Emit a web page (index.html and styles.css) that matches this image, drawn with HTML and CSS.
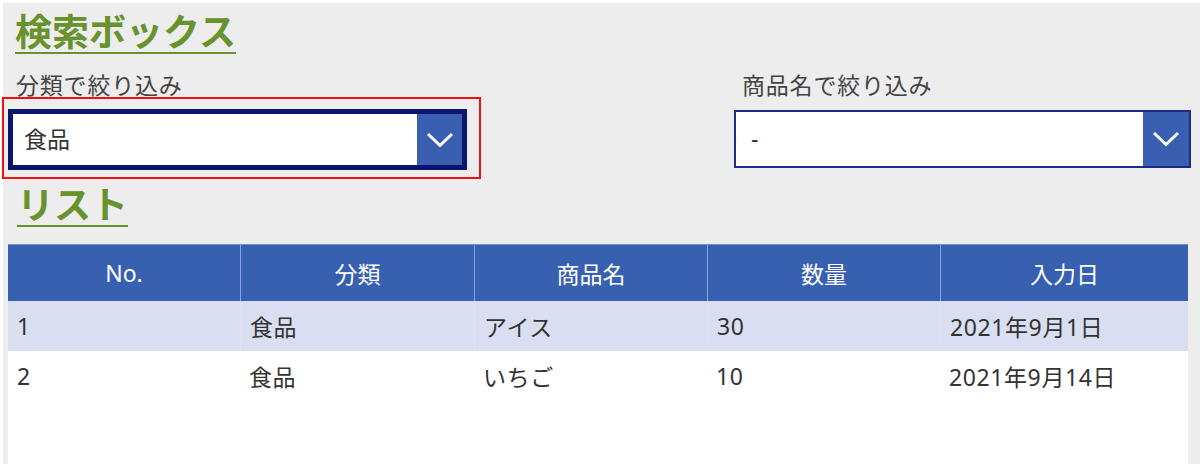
FILE: index.html
```html
<!DOCTYPE html>
<html lang="ja">
<head>
<meta charset="utf-8">
<title>検索ボックス</title>
<link rel="stylesheet" href="styles.css">
</head>
<body>
<div class="panel">
  <h1 class="section-title">検索ボックス</h1>
  <div class="filters">
    <div class="filter">
      <div class="filter-label">分類で絞り込み</div>
      <div class="dropdown dropdown-focused">
        <span class="dropdown-value">食品</span>
        <span class="dropdown-button">
          <svg width="28" height="16" viewBox="0 0 28 16"><polyline points="2,2 14,13.5 26,2" fill="none" stroke="#fff" stroke-width="3"/></svg>
        </span>
        <span class="highlight"></span>
      </div>
    </div>
    <div class="filter">
      <div class="filter-label">商品名で絞り込み</div>
      <div class="dropdown">
        <span class="dropdown-value">-</span>
        <span class="dropdown-button">
          <svg width="28" height="16" viewBox="0 0 28 16"><polyline points="2,2 14,13.5 26,2" fill="none" stroke="#fff" stroke-width="3"/></svg>
        </span>
      </div>
    </div>
  </div>
  <h1 class="section-title">リスト</h1>
  <div class="table">
    <div class="row head">
      <div class="cell">No.</div>
      <div class="cell">分類</div>
      <div class="cell">商品名</div>
      <div class="cell">数量</div>
      <div class="cell">入力日</div>
    </div>
    <div class="row body-row selected">
      <div class="cell">1</div>
      <div class="cell">食品</div>
      <div class="cell">アイス</div>
      <div class="cell">30</div>
      <div class="cell">2021年9月1日</div>
    </div>
    <div class="row body-row">
      <div class="cell">2</div>
      <div class="cell">食品</div>
      <div class="cell">いちご</div>
      <div class="cell">10</div>
      <div class="cell">2021年9月14日</div>
    </div>
  </div>
</div>
</body>
</html>
```
FILE: styles.css
```css
html, body {
  margin: 0;
  padding: 0;
  background: #ffffff;
}

body {
  font-family: "Noto Sans", "Noto Sans CJK JP", sans-serif;
  color: #333333;
}

.panel {
  margin: 3px 0 0 3px;
  height: 461px;
  background: #ededed;
  padding: 7px 0 0 5px;
  box-sizing: border-box;
  display: flex;
  flex-direction: column;
}

.section-title {
  margin: 0;
  padding-left: 7px;
  font-size: 37px;
  line-height: 44px;
  font-weight: 700;
  color: #67922c;
  text-decoration: underline;
  text-decoration-thickness: 2px;
  text-underline-offset: 6px;
  align-self: flex-start;
}

.filters {
  display: grid;
  grid-template-columns: 459px 457px;
  column-gap: 267px;
  align-items: start;
  margin-top: 16px;
}

.filter-label {
  font-size: 23px;
  line-height: 30px;
  color: #444444;
  padding-left: 8px;
  letter-spacing: 0.8px;
}

.dropdown {
  position: relative;
  margin-top: 10px;
  height: 58px;
  box-sizing: border-box;
  border: 2px solid #1c2c84;
  background: #ffffff;
  display: flex;
  align-items: stretch;
}

.dropdown-focused {
  margin-top: 9px;
  height: 61px;
  border: 5px solid #0a166e;
}

.dropdown-value {
  flex: 1;
  display: flex;
  align-items: center;
  padding-left: 15px;
  padding-bottom: 3px;
  font-size: 23px;
  color: #333333;
}

.dropdown-focused .dropdown-value {
  padding-left: 11px;
}

.dropdown-button {
  width: 46px;
  background: #3a5fb1;
  display: flex;
  align-items: center;
  justify-content: center;
}

.dropdown-focused .dropdown-button {
  width: 45px;
}

.highlight {
  position: absolute;
  left: -11px;
  top: -17px;
  right: -19px;
  bottom: -14px;
  border: 2px solid #f01010;
  pointer-events: none;
}

.section-title + .table {
  margin-top: 17px;
}

.filters + .section-title {
  margin-top: 13px;
  padding-left: 9px;
}

.table {
  width: 1180px;
  flex: 1;
  background: #ffffff;
}

.row {
  display: grid;
  grid-template-columns: 232px 234px 233px 233px 1fr;
  height: 50px;
  font-size: 23px;
}

.cell {
  display: flex;
  align-items: center;
  padding-left: 9px;
  white-space: nowrap;
}

.body-row .cell {
  letter-spacing: 0.6px;
}

.row.head {
  height: 57px;
  background: #3860b1;
  color: #ffffff;
  border-top: 1px solid #6f8fd0;
  box-sizing: border-box;
}

.row.head .cell {
  justify-content: center;
  padding-left: 0;
}

.row.head .cell + .cell {
  border-left: 1px solid #8aa3d9;
}

.row.selected {
  background: #d9dff0;
}

.row.selected .cell + .cell {
  border-left: 1px solid #dde3f2;
}
```
